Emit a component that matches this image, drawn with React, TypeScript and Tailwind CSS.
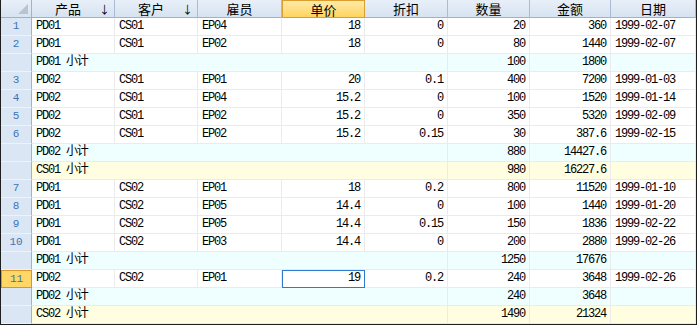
type DataRow = {
  kind: "data";
  no: number;
  cells: [string, string, string, string, string, string, string, string];
  selected?: boolean;
};
type SubRow = { kind: "sub"; label: string; qty: string; amt: string; tone: "cyan" | "yellow" };
type GridRow = DataRow | SubRow;

const rows: GridRow[] = [
  { kind: "data", no: 1, cells: ["PD01", "CS01", "EP04", "18", "0", "20", "360", "1999-02-07"] },
  { kind: "data", no: 2, cells: ["PD01", "CS01", "EP02", "18", "0", "80", "1440", "1999-02-07"] },
  { kind: "sub", label: "PD01 小计", qty: "100", amt: "1800", tone: "cyan" },
  { kind: "data", no: 3, cells: ["PD02", "CS01", "EP01", "20", "0.1", "400", "7200", "1999-01-03"] },
  { kind: "data", no: 4, cells: ["PD02", "CS01", "EP04", "15.2", "0", "100", "1520", "1999-01-14"] },
  { kind: "data", no: 5, cells: ["PD02", "CS01", "EP02", "15.2", "0", "350", "5320", "1999-02-09"] },
  { kind: "data", no: 6, cells: ["PD02", "CS01", "EP02", "15.2", "0.15", "30", "387.6", "1999-02-15"] },
  { kind: "sub", label: "PD02 小计", qty: "880", amt: "14427.6", tone: "cyan" },
  { kind: "sub", label: "CS01 小计", qty: "980", amt: "16227.6", tone: "yellow" },
  { kind: "data", no: 7, cells: ["PD01", "CS02", "EP01", "18", "0.2", "800", "11520", "1999-01-10"] },
  { kind: "data", no: 8, cells: ["PD01", "CS02", "EP05", "14.4", "0", "100", "1440", "1999-01-20"] },
  { kind: "data", no: 9, cells: ["PD01", "CS02", "EP05", "14.4", "0.15", "150", "1836", "1999-02-22"] },
  { kind: "data", no: 10, cells: ["PD01", "CS02", "EP03", "14.4", "0", "200", "2880", "1999-02-26"] },
  { kind: "sub", label: "PD01 小计", qty: "1250", amt: "17676", tone: "cyan" },
  { kind: "data", no: 11, cells: ["PD02", "CS02", "EP01", "19", "0.2", "240", "3648", "1999-02-26"], selected: true },
  { kind: "sub", label: "PD02 小计", qty: "240", amt: "3648", tone: "cyan" },
  { kind: "sub", label: "CS02 小计", qty: "1490", amt: "21324", tone: "yellow" },
];

const widths = ["w-[83px]", "w-[83px]", "w-[84px]", "w-[83px]", "w-[83px]", "w-[82px]", "w-[81px]", "w-[85px]"];
const rightAligned = [false, false, false, true, true, true, true, false];

function HeaderCell({ label, width, arrow, active }: { label: string; width: string; arrow?: boolean; active?: boolean }) {
  return (
    <div
      className={
        active
          ? `${width} relative h-[18px] flex items-center justify-center border border-[#dd9c2e] bg-gradient-to-b from-[#ffeaa6] to-[#ffd45e]`
          : `${width} relative h-[18px] flex items-center justify-center border-r border-b border-r-[#a9bcd5] border-b-[#9db1ca] bg-gradient-to-b from-[#e8eff8] to-[#d7e3f1]`
      }
    >
      <span className={arrow ? "pr-[10px] text-[13px] leading-none" : "text-[13px] leading-none"}>{label}</span>
      {arrow && <span className="absolute right-[4px] top-[2px] text-[11px] leading-[14px]">↓</span>}
    </div>
  );
}

function RowHeader({ no, selected }: { no?: number; selected?: boolean }) {
  return (
    <div
      className={
        selected
          ? "w-[31px] h-[18px] flex items-center justify-center border border-[#d9952a] bg-[#ffd767] text-[#3d6fae] tracking-normal text-[11px]"
          : "w-[31px] h-[18px] flex items-center justify-center border-r border-b border-r-[#9fb3cb] border-b-[#eef3fa] bg-[#dbe6f4] text-[#3d74b6] tracking-normal text-[11px]"
      }
    >
      {no}
    </div>
  );
}

export default function App() {
  return (
    <div className="w-[697px] h-[325px] overflow-hidden border-x border-b border-[#1f1f1f] bg-white text-black text-[12px] tracking-[-1.2px] font-['Liberation_Mono','Noto_Sans_CJK_SC',monospace]">
      <div className="flex tracking-normal font-['Noto_Sans_CJK_SC','Liberation_Sans',sans-serif]">
        <div className="w-[31px] h-[18px] relative border-r border-b border-r-[#9fb3cb] border-b-[#9db1ca] bg-gradient-to-b from-[#e8eff8] to-[#d7e3f1]">
          <svg className="absolute right-[3px] bottom-[3px]" width="10" height="10" viewBox="0 0 10 10">
            <polygon points="10,0 10,10 0,10" fill="#b7c3d1" />
          </svg>
        </div>
        <HeaderCell label="产品" width="w-[83px]" arrow />
        <HeaderCell label="客户" width="w-[83px]" arrow />
        <HeaderCell label="雇员" width="w-[84px]" />
        <HeaderCell label="单价" width="w-[83px]" active />
        <HeaderCell label="折扣" width="w-[83px]" />
        <HeaderCell label="数量" width="w-[82px]" />
        <HeaderCell label="金额" width="w-[81px]" />
        <HeaderCell label="日期" width="w-[85px]" />
      </div>
      {rows.map((row, i) =>
        row.kind === "data" ? (
          <div key={i} className="flex">
            <RowHeader no={row.no} selected={row.selected} />
            {row.cells.map((c, j) => (
              <div
                key={j}
                className={`${widths[j]} h-[18px] leading-[17px] border-r border-b border-[#ebebeb] px-[4px] whitespace-nowrap ${
                  rightAligned[j] ? "text-right" : "text-left"
                } ${row.selected && j === 3 ? "outline outline-1 -outline-offset-1 outline-[#2e7ad0]" : ""}`}
              >
                {c}
              </div>
            ))}
          </div>
        ) : (
          <div key={i} className={`flex ${row.tone === "cyan" ? "bg-[#effeff]" : "bg-[#fffee0]"}`}>
            <RowHeader />
            <div className="w-[416px] h-[18px] leading-[17px] border-r border-b border-[#ebebeb] px-[4px] whitespace-nowrap">
              {row.label}
            </div>
            <div className="w-[82px] h-[18px] leading-[17px] border-r border-b border-[#ebebeb] px-[4px] text-right">{row.qty}</div>
            <div className="w-[81px] h-[18px] leading-[17px] border-r border-b border-[#ebebeb] px-[4px] text-right">{row.amt}</div>
            <div className="w-[85px] h-[18px] border-r border-b border-[#ebebeb]" />
          </div>
        )
      )}
    </div>
  );
}
